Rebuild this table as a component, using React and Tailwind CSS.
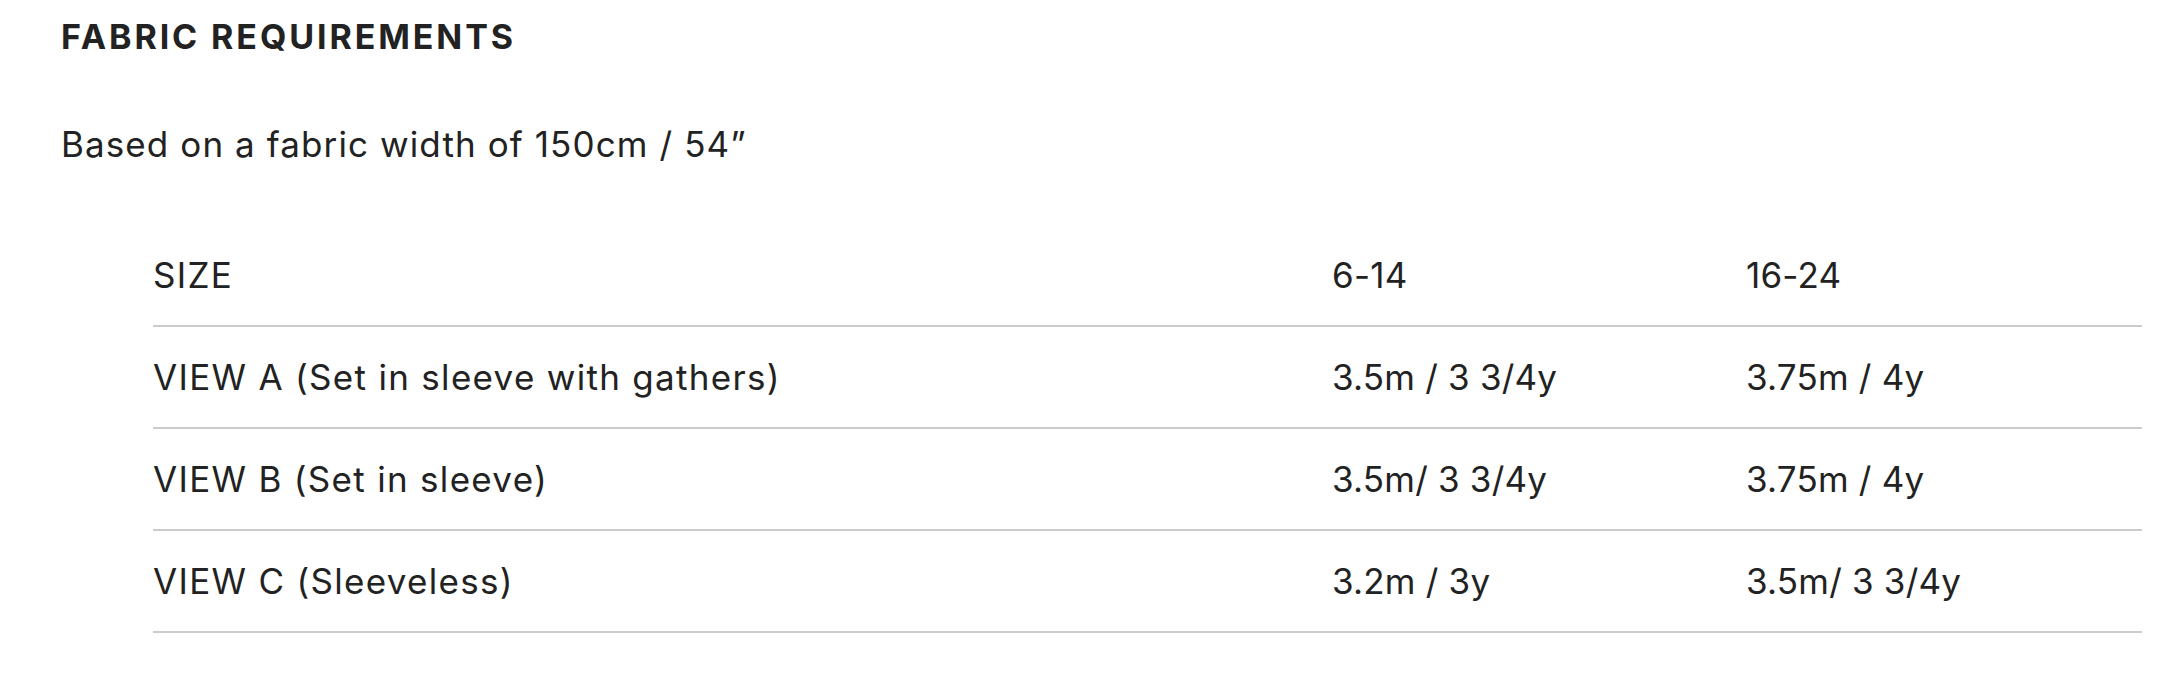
export default function App() {
  const rows = [
    ["VIEW A (Set in sleeve with gathers)", "3.5m / 3 3/4y", "3.75m / 4y"],
    ["VIEW B (Set in sleeve)", "3.5m/ 3 3/4y", "3.75m / 4y"],
    ["VIEW C (Sleeveless)", "3.2m / 3y", "3.5m/ 3 3/4y"],
  ];
  const font = { fontFamily: "Inter, 'DejaVu Sans', sans-serif" };
  return (
    <div className="w-[2178px] h-[696px] bg-white text-[#222222] pl-[61px] pr-[36px]" style={font}>
      <div className="h-[72px] flex items-center text-[34px] font-bold tracking-[2.9px]">
        FABRIC REQUIREMENTS
      </div>
      <div className="h-[144px] flex items-center text-[35px] tracking-[1.1px]">
        Based on a fabric width of 150cm / 54”
      </div>
      <div className="mt-[9px] ml-[92px] text-[35px]">
        <div className="h-[102px] grid grid-cols-[1179px_414px_1fr] items-center border-b-2 border-[#cccccc]">
          <div className="tracking-[1.3px]">SIZE</div>
          <div className="tracking-[0.2px]">6-14</div>
          <div className="tracking-[0.2px]">16-24</div>
        </div>
        {rows.map((r) => (
          <div key={r[0]} className="h-[102px] grid grid-cols-[1179px_414px_1fr] items-center border-b-2 border-[#cccccc]">
            <div className="tracking-[1.3px]">{r[0]}</div>
            <div className="tracking-[0.2px]">{r[1]}</div>
            <div className="tracking-[0.2px]">{r[2]}</div>
          </div>
        ))}
      </div>
    </div>
  );
}
